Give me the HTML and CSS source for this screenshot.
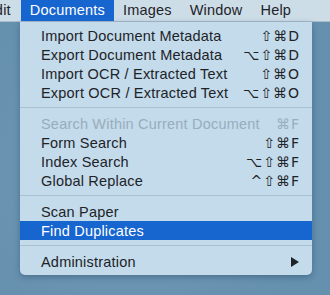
FILE: index.html
```html
<!DOCTYPE html>
<html>
<head>
    <meta charset="UTF-8">
    <title>Documents menu</title>
    <link rel="stylesheet" href="styles.css">
</head>
<body>
    <div class="menubar">
        <div class="bar-item first">Edit</div>
        <div class="bar-item open">Documents</div>
        <div class="bar-item">Images</div>
        <div class="bar-item">Window</div>
        <div class="bar-item">Help</div>
    </div>
    <div class="menu">
        <div class="item"><span>Import Document Metadata</span><span class="key">⇧⌘D</span></div>
        <div class="item"><span>Export Document Metadata</span><span class="key">⌥⇧⌘D</span></div>
        <div class="item"><span>Import OCR / Extracted Text</span><span class="key">⇧⌘O</span></div>
        <div class="item"><span>Export OCR / Extracted Text</span><span class="key">⌥⇧⌘O</span></div>
        <div class="sep"></div>
        <div class="item disabled"><span>Search Within Current Document</span><span class="key">⌘F</span></div>
        <div class="item"><span>Form Search</span><span class="key">⇧⌘F</span></div>
        <div class="item"><span>Index Search</span><span class="key">⌥⇧⌘F</span></div>
        <div class="item"><span>Global Replace</span><span class="key">^⇧⌘F</span></div>
        <div class="sep"></div>
        <div class="item"><span>Scan Paper</span></div>
        <div class="item active"><span>Find Duplicates</span></div>
        <div class="sep"></div>
        <div class="item"><span>Administration</span><span class="arrow"></span></div>
    </div>
</body>
</html>
```

FILE: styles.css
```css
body {
    margin: 0;
    width: 330px;
    height: 295px;
    overflow: hidden;
    background: #6893b1;
    background-image: radial-gradient(circle at 40% 60%, #7199b5 0%, #6590ae 70%);
    font-family: "Liberation Sans", Arial, sans-serif;
    font-size: 14.5px;
    letter-spacing: 0.2px;
    color: #1e2328;
}

.menubar {
    display: flex;
    height: 21px;
    background: #cddde8;
    border-bottom: 1px solid #a9bccb;
    margin-left: -15px;
}

.bar-item {
    padding: 0 9px;
    line-height: 21px;
    color: #1e2328;
}

.bar-item.first {
    padding: 0 10px 0 0;
}

.bar-item.open {
    background: #1765cf;
    color: #fff;
}

.menu {
    width: 292px;
    margin-left: 20px;
    padding: 4px 0;
    background: #c3dbeb;
    border-radius: 0 0 5px 5px;
    box-shadow: 0 2px 6px rgba(20, 50, 80, 0.35);
}

.item {
    display: flex;
    justify-content: space-between;
    align-items: center;
    height: 19px;
    padding: 0 12px 0 21px;
}

.item.disabled {
    color: #98adbd;
}

.item.active {
    background: #1765cf;
    color: #fff;
}

.key {
    font-family: "DejaVu Sans", "Liberation Sans", sans-serif;
    font-size: 14px;
    letter-spacing: 1px;
}

.sep {
    height: 1px;
    margin: 5px 0 6px;
    background: #a8c2d4;
}

.arrow {
    width: 0;
    height: 0;
    margin-right: 1px;
    border-top: 5px solid transparent;
    border-bottom: 5px solid transparent;
    border-left: 8px solid #1e2328;
}
```
